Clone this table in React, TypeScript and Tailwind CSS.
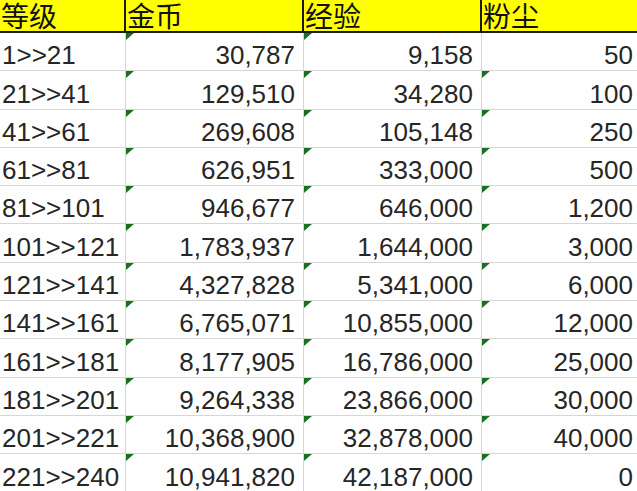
const rows = [
  ['1>>21', '30,787', '9,158', '50'],
  ['21>>41', '129,510', '34,280', '100'],
  ['41>>61', '269,608', '105,148', '250'],
  ['61>>81', '626,951', '333,000', '500'],
  ['81>>101', '946,677', '646,000', '1,200'],
  ['101>>121', '1,783,937', '1,644,000', '3,000'],
  ['121>>141', '4,327,828', '5,341,000', '6,000'],
  ['141>>161', '6,765,071', '10,855,000', '12,000'],
  ['161>>181', '8,177,905', '16,786,000', '25,000'],
  ['181>>201', '9,264,338', '23,866,000', '30,000'],
  ['201>>221', '10,368,900', '32,878,000', '40,000'],
  ['221>>240', '10,941,820', '42,187,000', '0'],
]

const headers = ['等级', '金币', '经验', '粉尘']

// little green "number stored as text" marker
function Flag() {
  return (
    <svg className="absolute left-0 top-0" width="8" height="7" viewBox="0 0 8 7">
      <polygon points="0,0 8,0 0,7" fill="#17711f" />
    </svg>
  )
}

export default function App() {
  return (
    <div
      className="w-[637px] h-[491px] overflow-hidden bg-white text-[#262626]"
      style={{ fontFamily: '"Liberation Sans", Arial, sans-serif' }}
    >
      <div className="grid grid-cols-[126px_178px_178px_160px]">
        {headers.map((h, i) => (
          <div
            key={h}
            className={`h-[33px] bg-[#ffff00] border-b-2 border-[#1a1a1a] pl-[1px] text-[28px] leading-[31px] text-[#111] ${i < 3 ? 'border-r-2' : ''}`}
            style={{ fontFamily: '"Noto Sans CJK SC", sans-serif' }}
          >
            {h}
          </div>
        ))}

        {rows.map((r, ri) =>
          r.map((c, ci) => (
            <div
              key={ri + '-' + ci}
              className={`relative h-[38.3px] flex items-end pb-[2px] text-[26px] leading-[26px] border-b border-[#d6d6d6] ${ci < 3 ? 'border-r' : ''} ${ci === 0 ? 'justify-start pl-[2px]' : ci === 3 ? 'justify-end pr-[9px]' : 'justify-end pr-[8px]'}`}
            >
              {ci > 0 && !(ri === 0 && ci === 3) && <Flag />}
              {c}
            </div>
          ))
        )}
      </div>
    </div>
  )
}
